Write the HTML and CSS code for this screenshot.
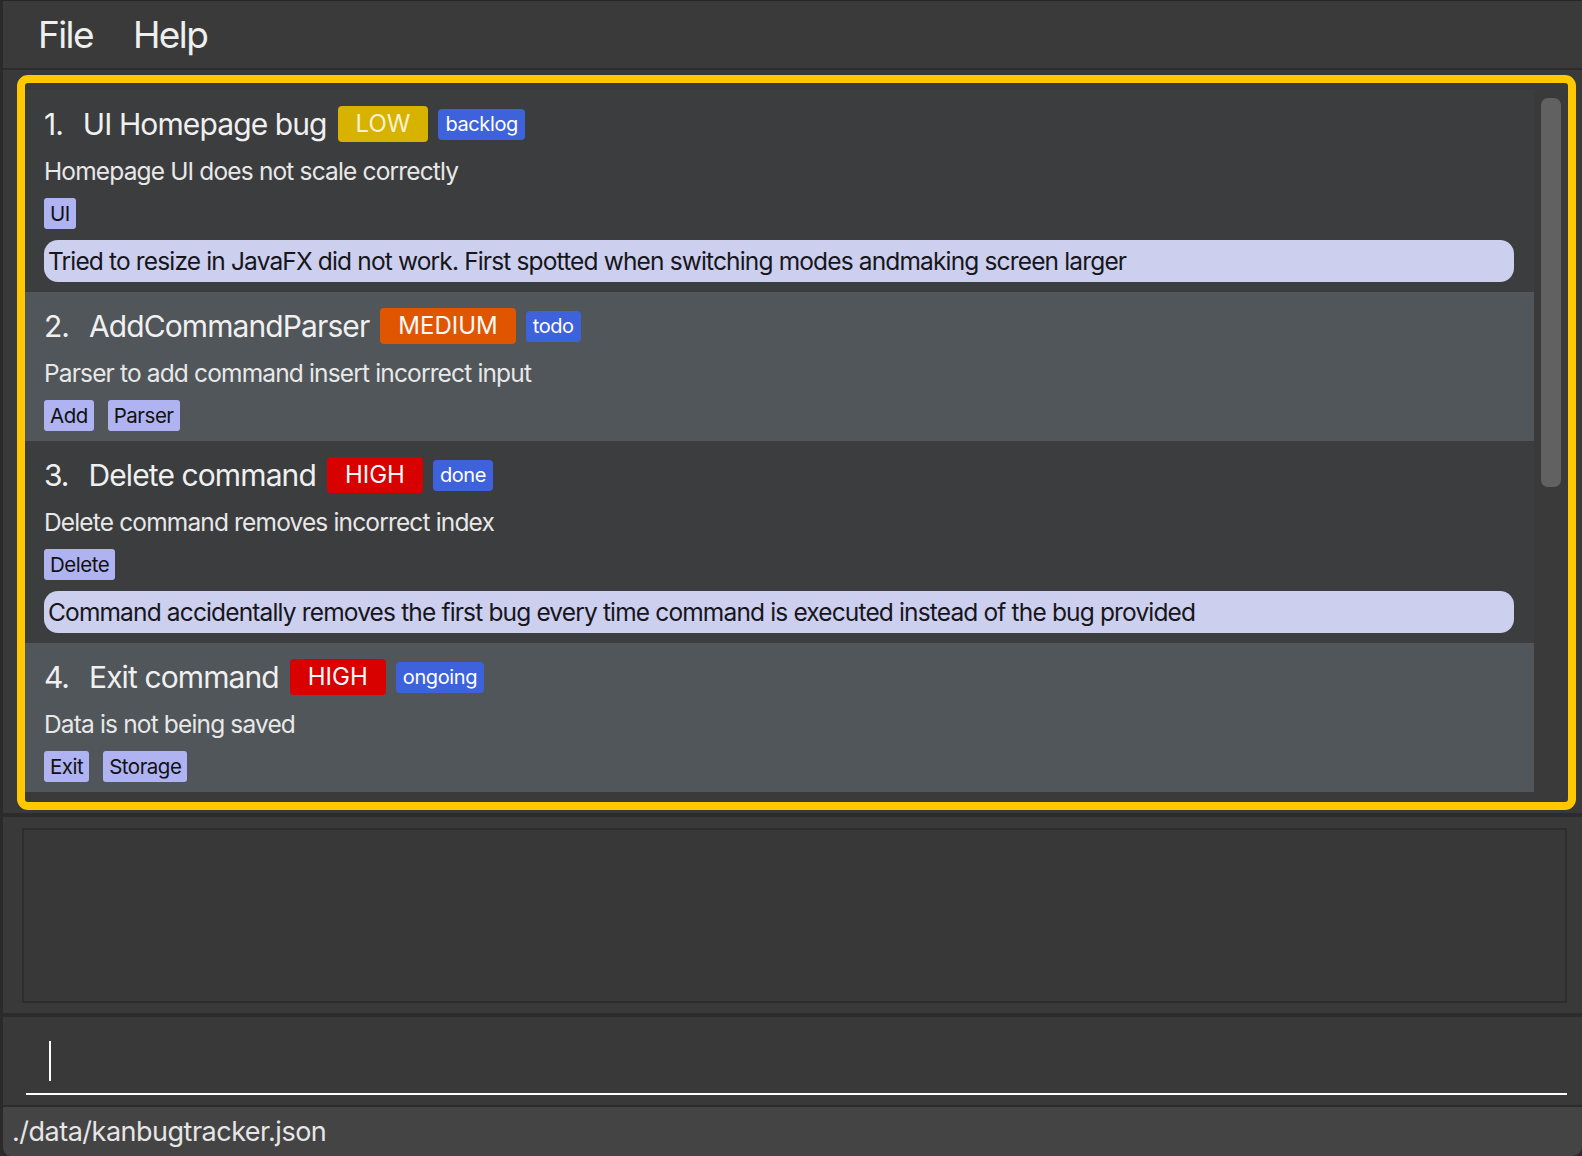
FILE: index.html
```html
<!DOCTYPE html>
<html>
<head>
<meta charset="utf-8">
<title>KanBugTracker</title>
<link rel="stylesheet" href="styles.css">
</head>
<body>
<div class="app">
  <div class="menubar">
    <span class="menu-item">File</span>
    <span class="menu-item">Help</span>
  </div>

  <div class="list-section">
    <div class="list-frame">
      <div class="list-rows">
        <div class="row odd">
          <div class="title-line">
            <span class="num">1.</span>
            <span class="name">UI Homepage bug</span>
            <span class="priority low">LOW</span>
            <span class="state">backlog</span>
          </div>
          <div class="desc">Homepage UI does not scale correctly</div>
          <div class="tags"><span class="tag">UI</span></div>
          <div class="remark">Tried to resize in JavaFX did not work. First spotted when switching modes andmaking screen larger</div>
        </div>
        <div class="row even">
          <div class="title-line">
            <span class="num">2.</span>
            <span class="name">AddCommandParser</span>
            <span class="priority medium">MEDIUM</span>
            <span class="state">todo</span>
          </div>
          <div class="desc">Parser to add command insert incorrect input</div>
          <div class="tags"><span class="tag">Add</span><span class="tag">Parser</span></div>
        </div>
        <div class="row odd">
          <div class="title-line">
            <span class="num">3.</span>
            <span class="name">Delete command</span>
            <span class="priority high">HIGH</span>
            <span class="state">done</span>
          </div>
          <div class="desc">Delete command removes incorrect index</div>
          <div class="tags"><span class="tag">Delete</span></div>
          <div class="remark">Command accidentally removes the first bug every time command is executed instead of the bug provided</div>
        </div>
        <div class="row even">
          <div class="title-line">
            <span class="num">4.</span>
            <span class="name">Exit command</span>
            <span class="priority high">HIGH</span>
            <span class="state">ongoing</span>
          </div>
          <div class="desc">Data is not being saved</div>
          <div class="tags"><span class="tag">Exit</span><span class="tag">Storage</span></div>
        </div>
      </div>
      <div class="scroll-track"><div class="scroll-thumb"></div></div>
    </div>
  </div>

  <div class="result-section">
    <div class="result-box"></div>
  </div>

  <div class="command-section">
    <div class="command-box"><span class="caret"></span></div>
  </div>

  <div class="statusbar">./data/kanbugtracker.json</div>
</div>
</body>
</html>
```

FILE: styles.css
```css
html, body {
  margin: 0;
  padding: 0;
  background: #2b2b2b;
}

body {
  font-family: "Inter", "Noto Sans", sans-serif;
}

.app {
  width: 1579px;
  height: 1155px;
  border-left: 3px solid #2a2a2a;
  border-top: 1px solid #262626;
  background: #393939;
  display: flex;
  flex-direction: column;
  border-bottom-left-radius: 10px;
  border-bottom-right-radius: 10px;
  overflow: hidden;
}

.menubar {
  height: 67px;
  border-bottom: 2px solid #2c2c2c;
  display: flex;
  align-items: center;
  padding-left: 35px;
  gap: 40px;
  background: #3a3a3a;
  flex-shrink: 0;
}

.menu-item {
  font-size: 37px;
  letter-spacing: -1.6px;
  line-height: 67px;
  color: #efefef;
}

.list-section {
  padding: 5px 6px 3px 14px;
  border-bottom: 4px solid #2c2c2c;
  flex-shrink: 0;
}

.list-frame {
  height: 712px;
  border: 8px solid #ffc800;
  border-radius: 11px;
  background: #3a3a3a;
  display: flex;
  padding-top: 7px;
  box-sizing: content-box;
  overflow: hidden;
}

.list-rows {
  flex: 1;
  display: flex;
  flex-direction: column;
}

.row {
  padding: 16px 14px 10px 19px;
}

.row.odd { background: #3c3d3f; }
.row.even { background: #50565a; }

.title-line {
  display: flex;
  align-items: center;
  height: 36px;
}

.num {
  font-size: 30px;
  letter-spacing: -1px;
  color: #f0f0f0;
  margin-right: 20px;
}

.name {
  font-size: 30px;
  letter-spacing: -0.9px;
  color: #f0f0f0;
  margin-right: 11px;
}

.priority {
  height: 36px;
  line-height: 36px;
  padding: 0 18px;
  font-size: 24px;
  color: #f8f8f8;
  border-radius: 4px;
  margin-right: 10px;
}

.priority.low { background: #d7b300; color: #f6f0d4; }
.priority.medium { background: #e05500; }
.priority.high { background: #d90000; }

.state {
  height: 31px;
  line-height: 31px;
  padding: 0 7px;
  font-size: 20px;
  letter-spacing: -0.4px;
  color: #ffffff;
  background: #3d62dc;
  border-radius: 4px;
}

.desc {
  margin-top: 14px;
  font-size: 24.5px;
  letter-spacing: -0.85px;
  line-height: 30px;
  color: #e8e8e8;
}

.tags {
  margin-top: 12px;
  display: flex;
  gap: 14px;
}

.tag {
  height: 31px;
  line-height: 31px;
  padding: 0 6px;
  font-size: 20.5px;
  letter-spacing: -0.5px;
  color: #111111;
  background: #b0b3f1;
  border-radius: 3px;
}

.remark {
  margin-top: 11px;
  margin-right: 6px;
  height: 42px;
  line-height: 42px;
  padding: 0 5px 0 4px;
  font-size: 24.5px;
  letter-spacing: -0.85px;
  color: #16161c;
  background: #cdcfee;
  border-radius: 14px;
}

.scroll-track {
  width: 34px;
  padding-top: 8px;
  display: flex;
  justify-content: center;
  align-items: flex-start;
}

.scroll-thumb {
  width: 20px;
  height: 389px;
  background: #616161;
  border-radius: 7px;
}

.result-section {
  padding: 11px 15px 10px 19px;
  border-bottom: 4px solid #2c2c2c;
  flex-shrink: 0;
}

.result-box {
  height: 171px;
  border: 2px solid #2d2d2d;
  background: #383838;
}

.command-section {
  height: 88px;
  padding: 0 15px 0 23px;
  border-bottom: 2px solid #2c2c2c;
  display: flex;
  flex-direction: column;
  flex-shrink: 0;
}

.command-box {
  margin-top: 24px;
  height: 52px;
  border-bottom: 2px solid #ffffff;
  padding-left: 23px;
}

.caret {
  display: block;
  width: 2px;
  height: 40px;
  background: #ffffff;
}

.statusbar {
  flex: 1;
  min-height: 0;
  overflow: hidden;
  background: #444444;
  font-size: 27px;
  letter-spacing: -0.5px;
  line-height: 46px;
  padding-top: 2px;
  padding-left: 9px;
  color: #e6e6e6;
}
```
